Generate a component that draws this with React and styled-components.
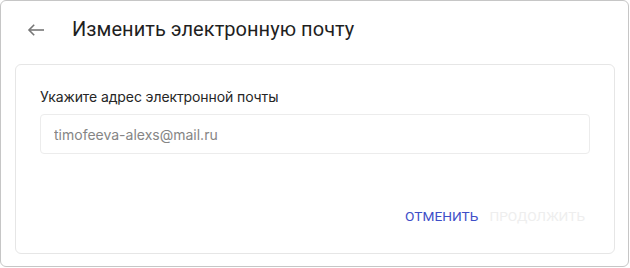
import React from "react";
import styled, { createGlobalStyle } from "styled-components";

const Global = createGlobalStyle`
  html, body { margin: 0; padding: 0; background: #ffffff; }
  * { box-sizing: border-box; }
`;

const Frame = styled.div`
  width: 629px;
  height: 267px;
  border: 1px solid #c6c6c6;
  border-radius: 6px;
  background: #fff;
  display: flex;
  flex-direction: column;
  padding: 0 14px;
`;

const Header = styled.div`
  height: 63px;
  display: flex;
  align-items: center;
  padding-left: 11px;
`;

const BackButton = styled.button`
  border: 0;
  background: none;
  padding: 0;
  width: 20px;
  height: 20px;
  display: flex;
  align-items: center;
  justify-content: center;
  margin-right: 26px;
  margin-top: -6px;
  cursor: pointer;
`;

const Title = styled.h1`
  margin: 0;
  margin-top: -7px;
  font-family: Roboto, "Liberation Sans", sans-serif;
  font-weight: 400;
  font-size: 20px;
  color: #1f1f1f;
  letter-spacing: 0.05px;
`;

const Card = styled.div`
  width: 600px;
  height: 190px;
  border: 1px solid #e6e6e6;
  border-radius: 6px;
  padding: 23px 24px 0;
  display: flex;
  flex-direction: column;
`;

const Label = styled.label`
  font-family: Inter, "Noto Sans", sans-serif;
  font-size: 14px;
  line-height: 17px;
  color: #262626;
  margin-bottom: 9px;
  letter-spacing: -0.1px;
`;

const Input = styled.input`
  height: 40px;
  width: 100%;
  border: 1px solid #ececec;
  border-radius: 4px;
  padding: 0 13px;
  font-family: Inter, "Noto Sans", sans-serif;
  font-size: 14px;
  color: #333;
  outline: none;
  &::placeholder { color: #858585; }
`;

const Actions = styled.div`
  display: flex;
  justify-content: flex-end;
  gap: 11px;
  margin-top: 54px;
  padding-right: 5px;
`;

const TextButton = styled.button`
  border: 0;
  background: none;
  padding: 0;
  font-family: Roboto, "Liberation Sans", sans-serif;
  font-size: 13.7px;
  font-weight: 400;
  text-transform: uppercase;
  color: ${(p) => (p.$disabled ? "#eeeeee" : "#3e4ec8")};
  cursor: ${(p) => (p.$disabled ? "default" : "pointer")};
`;

export default function App() {
  return (
    <>
      <Global />
      <Frame>
        <Header>
          <BackButton aria-label="Назад">
            <svg width="18" height="12" viewBox="0 0 18 12" fill="none">
              <path d="M17 6H2" stroke="#767676" strokeWidth="1.6" />
              <path d="M7.2 0.8L2 6l5.2 5.2" stroke="#767676" strokeWidth="1.6" fill="none" />
            </svg>
          </BackButton>
          <Title>Изменить электронную почту</Title>
        </Header>
        <Card>
          <Label>Укажите адрес электронной почты</Label>
          <Input placeholder="timofeeva-alexs@mail.ru" />
          <Actions>
            <TextButton>Отменить</TextButton>
            <TextButton $disabled disabled>Продолжить</TextButton>
          </Actions>
        </Card>
      </Frame>
    </>
  );
}
